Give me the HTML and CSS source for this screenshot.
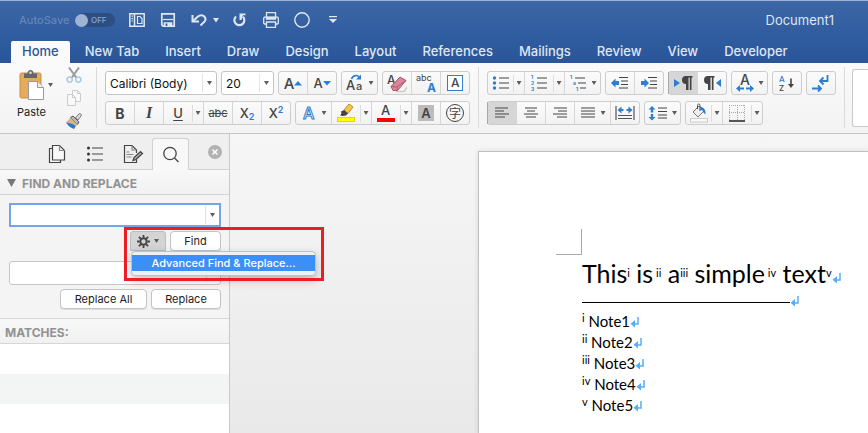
FILE: index.html
```html
<!doctype html>
<html lang="en">
<head>
    <meta charset="UTF-8">
    <meta name="viewport" content="width=device-width, initial-scale=1.0">
    <title>Document1</title>
    <link rel="stylesheet" href="styles.css">
</head>
<body>
    <svg class="defs" width="0" height="0" aria-hidden="true">
        <symbol id="return" viewBox="0 0 10 12"><path d="M8 1v7H3.500" fill="none" stroke="#58adf8" stroke-width="1.500"/><path d="M5 4v7.500L.5 7.800z" fill="#58adf8"/></symbol>
    </svg>

    <!-- Title bar -->
    <header class="titlebar">
        <div class="quick">
            <span class="autosave" id="autosaveLabel">AutoSave</span>
            <button class="switch" aria-labelledby="autosaveLabel"><span class="knob"></span>OFF</button>
            <div class="quick-icons">
                <button aria-label="Sidebar"><svg width="16" height="16" viewBox="0 0 16 16" fill="none" stroke="#dfe7f3" stroke-width="1.500"><path d="M.8 1.800h14.400v12.400H.8zM5.500 2v12"/><path d="M8.500 4.500h2.500l2 2v5H8.500z" stroke-width="1.200"/><path d="M3.200 3.500v6" stroke-dasharray="1.300 1.200"/></svg></button>
                <button aria-label="Save"><svg width="16" height="16" viewBox="0 0 16 16" fill="none" stroke="#dfe7f3" stroke-width="1.700"><path d="M1.800 1.800h12.400v12.400h-11l-1.400-1.400z"/><path d="M3 7.500h10" stroke-width="1.200"/><path d="M4.500 14v-3h7v3z" fill="#dfe7f3"/><path d="M6.500 11.500v2.500" stroke="#31599a"/></svg></button>
                <div class="undo">
                    <button aria-label="Undo"><svg width="16" height="16" viewBox="0 0 16 16" fill="none" stroke="#dfe7f3" stroke-width="2"><path d="M1.500 3v6.500H8"/><path d="M2 9l5-4.500c2-1.800 4.800-1.700 6.300 0 1.700 2 1.400 4-.2 5.500L9.500 13.500"/></svg></button>
                    <button aria-label="Undo history"><svg width="6" height="5" viewBox="0 0 6 5"><path d="M0 0h6L3 4.500z" fill="#dfe7f3"/></svg></button>
                </div>
                <button aria-label="Repeat"><svg width="16" height="16" viewBox="0 0 16 16" fill="none"><path d="M4 4.500a5 5 0 1 0 7 .3" stroke="#dfe7f3" stroke-width="2.200"/><path d="M7.500 1.500h6v1.800h-2.500L9.500 8h-2z" fill="#dfe7f3"/></svg></button>
                <button aria-label="Print"><svg width="16" height="16" viewBox="0 0 16 16" fill="none" stroke="#dfe7f3" stroke-width="1.300"><path d="M3.500 5V.7h9V5M3.500 12H1.500l-.8-.8V6l.8-.8h13l.8.8v5.200l-.8.8h-2"/><path d="M3.500 5.500h9v1.500h-9z" fill="#dfe7f3"/><path d="M3.500 10h9v5.300h-9z"/></svg></button>
                <button aria-label="Circle"><svg width="16" height="16" viewBox="0 0 16 16"><circle cx="8" cy="8" r="7.200" fill="none" stroke="#dfe7f3" stroke-width="1.400"/></svg></button>
                <button aria-label="Customize toolbar"><svg width="16" height="16" viewBox="0 0 16 16"><path d="M4 4h8v1.300H4zM4 7h8l-4 4z" fill="#dfe7f3"/></svg></button>
            </div>
        </div>
        <span class="doc-name">Document1</span>
    </header>

    <nav class="tabs">
        <a href="#" class="tab active">Home</a>
        <a href="#" class="tab">New Tab</a>
        <a href="#" class="tab">Insert</a>
        <a href="#" class="tab">Draw</a>
        <a href="#" class="tab">Design</a>
        <a href="#" class="tab">Layout</a>
        <a href="#" class="tab">References</a>
        <a href="#" class="tab">Mailings</a>
        <a href="#" class="tab">Review</a>
        <a href="#" class="tab">View</a>
        <a href="#" class="tab">Developer</a>
    </nav>

    <!-- Ribbon -->
    <div class="ribbon">
        <div class="clipboard">
            <button class="paste">
                <svg width="26" height="32" viewBox="0 0 26 32"><rect x="1" y="4" width="21" height="25" rx="1.500" fill="#e3ab5b" stroke="#c98f40"/><path d="M5 9V4.500h3.500a3 3.500 0 0 1 6 0H18V9z" fill="#666"/><circle cx="11.500" cy="3.800" r="1.300" fill="#ddd"/><path d="M9.500 12.500h9l6 6v12h-15z" fill="#fff" stroke="#999"/><path d="M18.500 12.500v6h6" fill="#eee" stroke="#999"/></svg>
                <span>Paste</span>
            </button>
            <button class="paste-menu" aria-label="Paste options"><i class="caret"></i></button>
            <div class="clip-icons">
                <button aria-label="Cut"><svg width="16" height="16" viewBox="0 0 16 16" fill="none"><path d="M3 .5l7.500 10.500M13 .5L5.500 11" stroke="#999" stroke-width="2"/><circle cx="3.700" cy="12.500" r="2.600" stroke="#a9c8ec" stroke-width="1.500"/><circle cx="12.300" cy="12.500" r="2.600" stroke="#a9c8ec" stroke-width="1.500"/></svg></button>
                <button aria-label="Copy"><svg width="16" height="16" viewBox="0 0 16 16" fill="#f8f8f8" stroke="#ccc"><path d="M6.500.5h5l3 3v8h-8z"/><path d="M1.500 4.500h5l3 3v8h-8z"/><path d="M11.500.5v3h3M6.500 4.500v3h3" fill="none"/></svg></button>
                <button aria-label="Format painter"><svg width="16" height="16" viewBox="0 0 16 16"><path d="M9.500 5L13 .8c1-.8 3 .7 2.200 2L12 7z" fill="#ddd" stroke="#777"/><path d="M4.500 4.500L7 3l6 6-1.500 2.500z" fill="#bbb" stroke="#555"/><path d="M0 9.500l4.500-5 7 7-3 4z" fill="#d7b58b"/><path d="M0 9.500c3 1 6 .5 9.500 3.500L8 16c-3-1-6-3-8-6.500z" fill="#2878c8"/></svg></button>
            </div>
        </div>
        <div class="divider"></div>

        <div class="group">
            <div class="row">
                <div class="combo font-name">
                    <select aria-label="Font"><option>Calibri (Body)</option></select><i class="caret"></i>
                </div>
                <div class="combo font-size">
                    <select aria-label="Font size"><option>20</option></select><i class="caret"></i>
                </div>
                <div class="tools">
                    <button class="tool" aria-label="Increase font size"><span class="grow">A</span><svg width="8" height="5" viewBox="0 0 8 5"><path d="M4 0l4 4.500H0z" fill="#2d7dd2"/></svg></button>
                    <button class="tool" aria-label="Decrease font size"><span class="shrink">A</span><svg width="8" height="5" viewBox="0 0 8 5"><path d="M0 0h8L4 4.500z" fill="#2d7dd2"/></svg></button>
                </div>
                <div class="tools">
                    <button class="tool menu" aria-label="Change case"><svg width="18" height="18" viewBox="0 0 18 18"><text x="0" y="16" font-size="13" class="glyph">A</text><text x="10" y="16" font-size="11" class="glyph">a</text><path d="M5.500 5C7 .8 11.500.8 13 3" fill="none" stroke="#2d7dd2" stroke-width="1.600"/><path d="M15 .5v5h-5z" fill="#2d7dd2"/></svg><i class="caret"></i></button>
                </div>
                <div class="tools">
                    <button class="tool" aria-label="Clear formatting"><svg width="22" height="22" viewBox="0 0 22 22"><text x="1" y="12" font-size="12" class="glyph">A</text><path d="M10 19.500h8l3-4" fill="none" stroke="#ccc" stroke-width="1.500"/><path d="M5 14.500L14 5l6 3.500-8.500 10H7z" fill="#dc8499" stroke="#a45a6c"/><path d="M5 14.500l6 .5 9-6.500M11 15l.5 3.500" fill="none" stroke="#a45a6c" stroke-width=".8"/></svg></button>
                    <button class="tool" aria-label="Phonetic guide"><span class="phonetic"><span>abc</span><b>A</b></span></button>
                    <button class="tool" aria-label="Character border"><svg width="16" height="16" viewBox="0 0 16 16"><rect x=".5" y=".5" width="15" height="15" fill="#fff" stroke="#2d7dd2"/><text x="4" y="12" font-size="12" class="glyph">A</text></svg></button>
                </div>
            </div>
            <div class="row">
                <div class="tools">
                    <button class="tool bold">B</button>
                    <button class="tool italic">I</button>
                    <button class="tool split" aria-label="Underline"><span class="face underline">U</span><span class="drop"><i class="caret"></i></span></button>
                    <button class="tool strike">abc</button>
                    <button class="tool script" aria-label="Subscript">X<sub>2</sub></button>
                    <button class="tool script" aria-label="Superscript">X<sup>2</sup></button>
                </div>
                <div class="tools">
                    <button class="tool menu" aria-label="Text effects"><svg width="16" height="18" viewBox="0 0 16 18"><text x="2" y="15" font-size="16" class="effect">A</text></svg><i class="caret"></i></button>
                    <button class="tool split" aria-label="Highlight"><span class="face"><svg width="20" height="20" viewBox="0 0 20 20"><path d="M8 7l5-6 4 3-5 6.500z" fill="#f6c644" stroke="#b98d2c"/><path d="M5 8.500l3-1.500 4 3.500-2 2-4 .5z" fill="#444"/><path d="M4 12.500l2-2 1 2z" fill="#222"/><rect x="1.500" y="14.500" width="17" height="4" fill="#ff0" stroke="#e3d900"/></svg></span><span class="drop"><i class="caret"></i></span></button>
                    <button class="tool split" aria-label="Font color"><span class="face"><svg width="20" height="20" viewBox="0 0 20 20"><text x="5" y="12" font-size="13" class="glyph">A</text><rect x="1" y="15" width="18" height="4" fill="#f00"/></svg></span><span class="drop"><i class="caret"></i></span></button>
                    <button class="tool" aria-label="Character shading"><span class="shade">A</span></button>
                    <button class="tool" aria-label="Enclose characters"><span class="enclose">字</span></button>
                </div>
            </div>
        </div>
        <div class="divider"></div>

        <div class="group">
            <div class="row">
                <div class="tools">
                    <button class="tool split bullets" aria-label="Bullets"><span class="face"><svg width="18" height="16" viewBox="0 0 18 16"><path d="M7 3h10M7 8h10M7 13h10" stroke="#444" stroke-width="1.200"/><g fill="#2d7dd2"><circle cx="2.500" cy="3" r="1.700"/><circle cx="2.500" cy="8" r="1.700"/><circle cx="2.500" cy="13" r="1.700"/></g></svg></span><span class="drop"><i class="caret"></i></span></button>
                    <button class="tool split" aria-label="Numbering"><span class="face"><svg width="18" height="18" viewBox="0 0 18 18"><path d="M7 4h10M7 9h10M7 14h10" stroke="#444" stroke-width="1.200"/><g font-size="5" class="glyph blue heavy"><text x="1" y="5">1</text><text x="1" y="11">2</text><text x="1" y="17">3</text></g></svg></span><span class="drop"><i class="caret"></i></span></button>
                    <button class="tool menu" aria-label="Multilevel list"><svg width="18" height="18" viewBox="0 0 18 18"><path d="M6 4h10M9 9h8M11 14h6" stroke="#444" stroke-width="1.200"/><g font-size="5" class="glyph blue heavy"><text x="1" y="5">1</text><text x="4" y="11">a</text><text x="7" y="17">1</text></g></svg><i class="caret"></i></button>
                </div>
                <div class="tools">
                    <button class="tool" aria-label="Decrease indent"><svg width="18" height="14" viewBox="0 0 18 14"><path d="M8 1.500h9M10 5h7M10 8.500h7M8 12h9" stroke="#444" stroke-width="1.200"/><path d="M0 7l4.500-4.500v2.500H8v4H4.500v2.500z" fill="#2d7dd2"/></svg></button>
                    <button class="tool" aria-label="Increase indent"><svg width="18" height="14" viewBox="0 0 18 14"><path d="M8 1.500h9M10 5h7M10 8.500h7M8 12h9" stroke="#444" stroke-width="1.200"/><path d="M9 7L4.500 2.500v2.500H1v4h3.500v2.500z" fill="#2d7dd2"/></svg></button>
                </div>
                <div class="tools">
                    <button class="tool pressed" aria-label="Left to right"><svg width="19" height="16" viewBox="0 0 19 16"><path d="M0 4l6 4-6 4z" fill="#2d7dd2"/><path d="M12 9a4 4 0 0 1 0-8h6.500v1.400H17.500V15H15.800V2.400h-1.300V15H12z" fill="#444"/></svg></button>
                    <button class="tool" aria-label="Right to left"><svg width="19" height="16" viewBox="0 0 19 16"><path d="M18 4l-5 4 5 4z" fill="#2d7dd2"/><path d="M5 9a4 4 0 0 1 0-8h6.500v1.400H10.500V15H8.800V2.400H7.500V15H5z" fill="#444"/></svg></button>
                </div>
                <div class="tools">
                    <button class="tool menu" aria-label="Text scaling"><svg width="18" height="20" viewBox="0 0 18 20"><text x="4" y="12" font-size="14" class="glyph">A</text><path d="M0 15.500L4 12v2.500h4v2H4V19zM18 15.500L14 12v2.500h-4v2h4V19z" fill="#2d7dd2"/></svg><i class="caret"></i></button>
                </div>
                <div class="tools">
                    <button class="tool" aria-label="Sort"><svg width="18" height="20" viewBox="0 0 18 20"><text x="1" y="9" font-size="8" class="glyph blue">A</text><text x="1" y="18" font-size="8" class="glyph">Z</text><path d="M12.200 5.500v5.500H10l3 4 3-4h-2.200V5.500z" fill="#444"/></svg></button>
                </div>
                <div class="tools">
                    <button class="tool" aria-label="Show marks"><svg width="18" height="18" viewBox="0 0 18 18" fill="none" stroke="#2d7dd2" stroke-width="1.800"><path d="M15.500 1v6H8.500M11.500 3.500L8 7l3.500 3.500"/><path d="M0 14.500h9M6 11.500l3 3-3 3"/></svg></button>
                </div>
            </div>
            <div class="row">
                <div class="tools">
                    <button class="tool pressed" aria-label="Align left"><svg width="16" height="14" viewBox="0 0 16 14"><path d="M1 2h13M1 5h9M1 8h14M1 11h10" stroke="#444" stroke-width="1.200"/></svg></button>
                    <button class="tool" aria-label="Center"><svg width="16" height="14" viewBox="0 0 16 14"><path d="M2 2h12M4 5h8M1 8h14M3 11h10" stroke="#444" stroke-width="1.200"/></svg></button>
                    <button class="tool" aria-label="Align right"><svg width="16" height="14" viewBox="0 0 16 14"><path d="M2 2h13M6 5h9M1 8h14M5 11h10" stroke="#444" stroke-width="1.200"/></svg></button>
                    <button class="tool menu" aria-label="Justify"><svg width="16" height="14" viewBox="0 0 16 14"><path d="M1 2h14M1 5h14M1 8h14M1 11h14" stroke="#444" stroke-width="1.200"/></svg><i class="caret"></i></button>
                    <button class="tool" aria-label="Distribute"><svg width="20" height="16" viewBox="0 0 20 16"><path d="M1 1v14M19 1v14M3 10.500h14M3 13.500h14" stroke="#555" stroke-width="1.200"/><path d="M2.500 5L6.500 1.500V4h2v2h-2v2.500zM17.500 5L13.500 1.500V4h-2v2h2v2.500z" fill="#2d7dd2"/></svg></button>
                </div>
                <div class="tools">
                    <button class="tool menu" aria-label="Line spacing"><svg width="19" height="16" viewBox="0 0 19 16"><path d="M10 3h9M10 6.500h9M10 10h9M10 13h9" stroke="#444" stroke-width="1.200"/><path d="M4 1l3.500 3.500H5.200v3h-2.400v-3H.5zM4 15.500L.5 12h2.300V9h2.400v3h2.300z" fill="#2d7dd2"/></svg><i class="caret"></i></button>
                </div>
                <div class="tools">
                    <button class="tool split bullets" aria-label="Shading"><span class="face"><svg width="20" height="20" viewBox="0 0 20 20"><path d="M4 9l6-6 5 5-6 6z" fill="#eee" stroke="#777"/><path d="M8.500 6V2.500c0-2 2.500-2 2.500 0V7" fill="none" stroke="#444"/><path d="M12 4c3 .5 5 3 4.500 7.500-2-1-2-3-3.500-4.500l-3 1z" fill="#2d7dd2"/><rect x="1.500" y="15.500" width="17" height="3.500" fill="#fafafa" stroke="#ccc"/></svg></span><span class="drop"><i class="caret"></i></span></button>
                    <button class="tool split" aria-label="Borders"><span class="face"><svg width="18" height="18" viewBox="0 0 18 18" fill="none"><path d="M1 1.500h16M1.500 1v15M9.500 1v15M16.500 1v15M1 8.500h16" stroke="#aaa" stroke-dasharray="1 1"/><path d="M1 17h16" stroke="#222" stroke-width="1.500"/></svg></span><span class="drop"><i class="caret"></i></span></button>
                </div>
            </div>
        </div>
        <div class="divider"></div>
        <div class="styles-gallery"></div>
    </div>

    <main class="workspace">
        <!-- Navigation pane -->
        <aside class="pane">
            <div class="pane-tabs">
                <button class="pane-tab" aria-label="Thumbnails"><svg width="18" height="20" viewBox="0 0 18 20" fill="#f8f8f8" stroke="#444" stroke-width="1.200"><path d="M4 4.500H1.500v14H12.500V16"/><path d="M4.500 1.500h7l5 5v9.500h-12z"/><path d="M11.500 1.500v5h5" fill="none" stroke="#888"/></svg></button>
                <button class="pane-tab" aria-label="Document map"><svg width="18" height="20" viewBox="0 0 18 20"><path d="M6 4h11M6 10h11M6 16h11" stroke="#444" stroke-width="1.200"/><g fill="#333"><circle cx="2.500" cy="4" r="1.500"/><circle cx="2.500" cy="10" r="1.500"/><circle cx="2.500" cy="16" r="1.500"/></g></svg></button>
                <button class="pane-tab" aria-label="Reviewing"><svg width="20" height="20" viewBox="0 0 20 20" fill="none" stroke="#444" stroke-width="1.200"><path d="M13.500 15.500v3h-12v-17H9l4.500 4.500v3"/><path d="M9 1.500v4.500h4.500M3.500 8h3M3.500 10.500h7M3.500 13h5" stroke="#888"/><path d="M10 16.500l1-3 6.500-6 2 2-6.500 6z" fill="#aaa"/></svg></button>
                <button class="pane-tab current" aria-label="Find and replace"><svg width="18" height="18" viewBox="0 0 18 18" fill="none" stroke="#444" stroke-width="1.300"><circle cx="8" cy="7.500" r="6.200"/><path d="M12.500 12l4 4"/></svg></button>
                <button class="pane-close" aria-label="Close"><svg width="14" height="14" viewBox="0 0 14 14"><circle cx="7" cy="7" r="7" fill="#b2b2b2"/><path d="M4.500 4.500l5 5M9.500 4.500l-5 5" stroke="#fff" stroke-width="1.600"/></svg></button>
            </div>
            <h2 class="pane-title"><svg width="9" height="8" viewBox="0 0 9 8"><path d="M0 0h9L4.500 8z" fill="#777"/></svg>FIND AND REPLACE</h2>
            <div class="find-form">
                <div class="field focused">
                    <input type="text" aria-label="Find">
                    <button class="field-menu" aria-label="Recent searches"><i class="caret"></i></button>
                </div>
                <div class="actions find-actions">
                    <button class="gear" aria-label="Find options"><svg width="13" height="13" viewBox="0 0 13 13" fill="none" stroke="#444"><circle cx="6.500" cy="6.500" r="3.200" stroke-width="2"/><g stroke-width="1.800"><path d="M6.500 0v2.500M6.500 10.500V13M0 6.500h2.500M10.500 6.500H13M1.900 1.900l1.800 1.800M9.300 9.300l1.800 1.800M11.100 1.900L9.300 3.700M3.700 9.300l-1.800 1.800"/></g></svg><i class="caret"></i></button>
                    <button class="push find">Find</button>
                    <div class="highlight"></div>
                    <div class="popup">
                        <button>Advanced Find &amp; Replace...</button>
                    </div>
                </div>
                <div class="field">
                    <input type="text" aria-label="Replace with">
                    <button class="field-menu" aria-label="Recent replacements"><i class="caret"></i></button>
                </div>
                <div class="actions">
                    <button class="push replace-all">Replace All</button>
                    <button class="push replace">Replace</button>
                </div>
            </div>
            <h2 class="pane-title matches">MATCHES:</h2>
            <div class="results"></div>
        </aside>

        <!-- Document -->
        <div class="canvas">
            <article class="page">
                <div class="corner"></div>
                <p class="title">This<sup>i</sup> is<sup> ii</sup> a<sup>iii</sup> simple<sup> iv</sup> text<sup>v</sup><svg class="ret"><use href="#return"/></svg></p>
                <div class="rule"><hr><svg class="ret"><use href="#return"/></svg></div>
                <p class="note"><sup>i</sup> Note1<svg class="ret"><use href="#return"/></svg></p>
                <p class="note"><sup>ii</sup> Note2<svg class="ret"><use href="#return"/></svg></p>
                <p class="note"><sup>iii</sup> Note3<svg class="ret"><use href="#return"/></svg></p>
                <p class="note"><sup>iv</sup> Note4<svg class="ret"><use href="#return"/></svg></p>
                <p class="note"><sup>v</sup> Note5<svg class="ret"><use href="#return"/></svg></p>
            </article>
        </div>
    </main>
</body>
</html>
```
FILE: styles.css
```css
* {
    box-sizing: border-box;
}
body {
    margin: 0;
    min-height: 100vh;
    display: flex;
    flex-direction: column;
    overflow: hidden;
    font-family: Inter, "Liberation Sans", "Noto Sans CJK JP", sans-serif;
    font-size: 13px;
    color: #222;
    background: #f5f5f5;
}
button {
    padding: 0;
    border: none;
    background: none;
    font: inherit;
    color: inherit;
}
svg {
    display: block;
    flex: none;
    overflow: visible;
}
.defs {
    position: absolute;
}
.caret {
    flex: none;
    width: 5px;
    height: 4px;
    background: #5c5c5c;
    clip-path: polygon(0 0, 100% 0, 50% 100%);
}

/* title bar */
.titlebar {
    display: flex;
    align-items: center;
    justify-content: space-between;
    height: 39px;
    padding: 0 34px 0 19px;
    border-top: 1px solid #9db2d0;
    background: linear-gradient(#3c67a6, #2f5b9f);
    color: #dfe7f3;
}
.quick, .quick-icons, .undo {
    display: flex;
    align-items: center;
}
.autosave {
    width: 56px;
    font-size: 11px;
    font-weight: 500;
    color: #6485b8;
}
.switch {
    display: flex;
    align-items: center;
    gap: 3px;
    width: 40px;
    height: 14px;
    margin-right: 14px;
    border-radius: 7px;
    background: #2d4e83;
    font-size: 8px;
    font-weight: 500;
    color: #8ea6cc;
}
.knob {
    width: 13px;
    height: 13px;
    border-radius: 50%;
    background: #9fb3d5;
}
.quick-icons {
    gap: 15px;
}
.undo {
    width: 26px;
    gap: 6px;
}

/* tabs */
.tabs {
    display: flex;
    align-items: flex-end;
    height: 24px;
    padding-left: 11px;
    background: linear-gradient(#2f5b9f, #2a5699);
    white-space: nowrap;
}
.tab {
    height: 22px;
    padding: 0 13px;
    line-height: 21px;
    font-weight: 500;
    color: #dfe7f3;
    text-decoration: none;
}
.tab.active {
    padding: 0 11px;
    margin-right: 2px;
    border-radius: 2px 2px 0 0;
    background: #fafafa;
    color: #2b579a;
}

/* ribbon */
.ribbon {
    display: flex;
    height: 71px;
    border-bottom: 1px solid #c6c6c6;
    background: linear-gradient(#fafafa, #f3f3f3);
}
.divider {
    flex: none;
    width: 1px;
    margin: 4px 0 5px;
    background: #dadada;
}
.clipboard {
    display: flex;
    flex: none;
    width: 96px;
    padding: 4px 0 0 15px;
}
.paste {
    display: flex;
    flex-direction: column;
    align-items: center;
    gap: 4px;
    width: 33px;
    padding-top: 2px;
    font-size: 11px;
}
.paste-menu {
    width: 6px;
    height: 36px;
    margin-right: 12px;
}
.paste-menu .caret {
    display: block;
}
.clip-icons {
    display: flex;
    flex-direction: column;
    gap: 7px;
}
.group {
    display: flex;
    flex: none;
    flex-direction: column;
    gap: 6px;
    padding: 8px;
}
.row {
    display: flex;
    gap: 4px;
}
.combo {
    display: flex;
    align-items: center;
    height: 24px;
    padding-right: 4px;
    border: 1px solid #c4c4c4;
    border-radius: 3px;
    background: #fff;
}
.combo select {
    flex: 1;
    min-width: 0;
    height: 18px;
    margin-right: 4px;
    padding: 0 0 0 4px;
    border: none;
    border-right: 1px solid #e4e4e4;
    appearance: none;
    background: none;
    font: inherit;
    font-size: 12px;
    color: #111;
}
.font-name {
    width: 112px;
}
.font-size {
    width: 53px;
}
.tools {
    display: flex;
    height: 24px;
    border: 1px solid #cdcdcd;
    border-radius: 3px;
    background: linear-gradient(#fbfbfb, #f2f2f2);
}
.tool {
    display: flex;
    align-items: center;
    justify-content: center;
    width: 29px;
    border-left: 1px solid #d6d6d6;
    color: #444;
}
.tool:first-child {
    margin-left: -1px;
    border-left-color: transparent;
}
.tool.menu {
    gap: 5px;
    width: 36px;
}
.tool.split {
    width: 40px;
}
.tool.bullets {
    width: 37px;
}
.tool.pressed {
    border-left-color: #a8a8a8;
    background: #d6d6d6;
}
.face {
    display: flex;
    flex: 1;
    justify-content: center;
}
.drop {
    display: flex;
    align-items: center;
    justify-content: center;
    width: 11px;
    height: 17px;
    border-left: 1px solid #ddd;
}
.glyph {
    fill: #444;
    font-weight: 500;
}
.blue {
    fill: #2d7dd2;
}
.heavy {
    font-weight: 700;
}
.grow, .shrink {
    font-size: 15px;
    font-weight: 500;
}
.shrink {
    font-size: 13px;
}
.phonetic {
    display: flex;
    flex-direction: column;
    width: 20px;
    font-size: 9px;
    line-height: 9px;
    text-align: left;
}
.phonetic b {
    align-self: flex-end;
    font-size: 12px;
    line-height: 11px;
    color: #2d7dd2;
}
.bold {
    font-size: 14px;
    font-weight: 700;
}
.italic {
    font-family: "Liberation Serif", serif;
    font-size: 16px;
    font-weight: 700;
    font-style: italic;
}
.underline {
    font-weight: 500;
    text-decoration: underline;
    text-underline-offset: 2px;
}
.strike {
    font-size: 11px;
    text-decoration: line-through;
}
.script {
    font-weight: 500;
}
.script sub, .script sup {
    font-size: 9px;
    line-height: 1;
    font-weight: 600;
    color: #2d7dd2;
}
.script sub {
    padding-top: 7px;
}
.script sup {
    padding-bottom: 7px;
}
.effect {
    fill: #fff;
    stroke: #2d7dd2;
    stroke-width: 1;
    font-weight: 500;
}
.shade {
    width: 16px;
    background: #bcbcbc;
    line-height: 16px;
    font-weight: 600;
}
.enclose {
    width: 18px;
    height: 18px;
    border: 1px solid #444;
    border-radius: 50%;
    font-family: "Noto Sans CJK JP", sans-serif;
    font-size: 12px;
    line-height: 15px;
}
.styles-gallery {
    flex: 1;
    margin: 6px 0 6px 7px;
    border: 1px solid #c8c8c8;
    border-right: none;
    border-radius: 3px 0 0 3px;
    background: #fff;
}

/* navigation pane */
.workspace {
    display: flex;
    flex: 1;
}
.pane {
    display: flex;
    flex: none;
    flex-direction: column;
    width: 230px;
    border-right: 1px solid #c9c9c9;
    background: #f4f4f4;
}
.pane-tabs {
    display: flex;
    height: 36px;
    padding: 4px 0 0 38px;
    border-bottom: 1px solid #d2d2d2;
    background: #efefef;
}
.pane-tab {
    display: flex;
    align-items: center;
    justify-content: center;
    width: 38px;
    height: 32px;
}
.pane-tab.current {
    width: 37px;
    border: 1px solid #d2d2d2;
    border-bottom: none;
    border-radius: 3px 3px 0 0;
    background: #f8f8f8;
}
.pane-close {
    height: 28px;
    margin-left: 19px;
}
.pane-title {
    display: flex;
    align-items: center;
    gap: 6px;
    height: 25px;
    margin: 0;
    padding: 2px 0 0 7px;
    border-bottom: 1px solid #d6d6d6;
    background: linear-gradient(#f8f8f8, #f1f1f1);
    font-size: 12px;
    font-weight: 700;
    color: #929292;
}
.pane-title.matches {
    height: 26px;
    padding-left: 5px;
    border-top: 1px solid #d6d6d6;
}
.find-form {
    display: flex;
    flex-direction: column;
    gap: 4px;
    padding: 8px 8px 9px 9px;
}
.field {
    display: flex;
    align-items: center;
    height: 24px;
    border: 1px solid #c6c6c6;
    border-radius: 3px;
    background: #fff;
}
.field.focused {
    border: 2px solid #74a5e8;
    border-radius: 0;
}
.field input {
    flex: 1;
    min-width: 0;
    height: 18px;
    border: none;
    outline: none;
    background: none;
    font: inherit;
}
.field-menu {
    display: flex;
    align-items: center;
    justify-content: center;
    width: 14px;
    height: 18px;
    border-left: 1px solid #e0e0e0;
}
.actions {
    display: flex;
    justify-content: flex-end;
    gap: 4px;
}
.find-actions {
    position: relative;
    margin-bottom: 6px;
}
.push {
    height: 20px;
    border: 1px solid #c3c3c3;
    border-radius: 4px;
    background: #fff;
    box-shadow: 0 1px 0 #ddd;
    font-size: 11px;
}
.find {
    width: 51px;
}
.replace-all {
    width: 87px;
}
.replace {
    width: 70px;
}
.gear {
    display: flex;
    align-items: center;
    justify-content: center;
    gap: 4px;
    width: 36px;
    height: 20px;
    border: 1px solid #bdbdbd;
    border-radius: 3px 3px 0 0;
    background: #d4d4d4;
}
/* overlay frame and menu hang over the pane edge */
.highlight {
    position: absolute;
    z-index: 2;
    top: -4px;
    right: -103px;
    width: 200px;
    height: 54px;
    border: 3px solid #ee1c25;
}
.popup {
    position: absolute;
    z-index: 1;
    top: 20px;
    right: -95px;
    width: 185px;
    padding: 3px 0 4px;
    border: 1px solid #c0c0c0;
    border-radius: 4px;
    background: #f0f0f0;
    box-shadow: 0 4px 10px rgba(0, 0, 0, 0.25);
}
.popup button {
    display: block;
    width: 100%;
    height: 16px;
    background: #3b8ff7;
    color: #fff;
    font-size: 11px;
    font-weight: 500;
}
.results {
    flex: 1;
    background: repeating-linear-gradient(#fff 0 30px, #f3f5f5 30px 60px);
}

/* document */
.canvas {
    flex: 1;
    display: flex;
    padding: 17px 0 0 248px;
    background: linear-gradient(#f6f6f6, #e9e9e9);
}
.page {
    flex: 1;
    padding: 77px 0 0 77px;
    border: 1px solid #c2c2c2;
    border-width: 1px 0 0 1px;
    background: #fff;
    box-shadow: 0 0 5px rgba(0, 0, 0, 0.12);
    font-family: Lato, "Liberation Sans", sans-serif;
    color: #000;
    white-space: nowrap;
}
.corner {
    width: 26px;
    height: 26px;
    border: 1px solid #a9a9a9;
    border-width: 0 1px 1px 0;
}
.title {
    margin: 0 0 0 26px;
    font-size: 25px;
    line-height: 36px;
}
.title sup {
    font-size: 11px;
    line-height: 0;
    vertical-align: 6px;
}
.ret {
    display: inline-block;
    width: 10px;
    height: 12px;
    vertical-align: -1px;
}
.rule {
    display: flex;
    align-items: center;
    height: 20px;
    margin-left: 26px;
}
.rule hr {
    width: 208px;
    margin: 3px 0 0;
    border: none;
    border-top: 1px solid #000;
}
.note {
    margin: 0 0 0 26px;
    font-size: 15px;
    line-height: 21px;
}
.note sup {
    font-size: 11px;
    line-height: 0;
    vertical-align: 5px;
}
```
